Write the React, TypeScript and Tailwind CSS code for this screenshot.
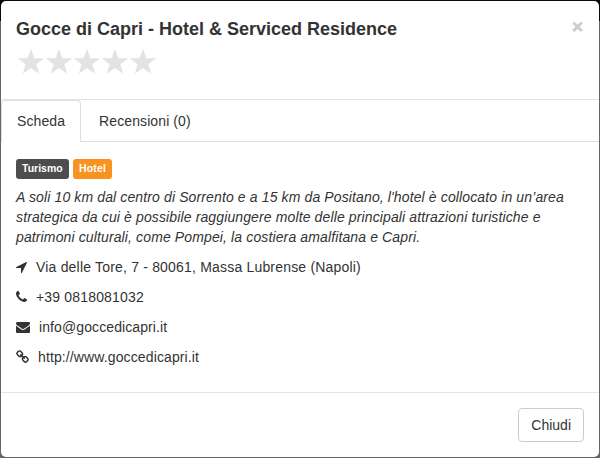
import type { ReactNode } from 'react';

const stars = [1, 2, 3, 4, 5];

const tags = [
  { label: 'Turismo', className: 'w-[53px] bg-[#4d4d4d]' },
  { label: 'Hotel', className: 'w-[39px] bg-[#f7931e] tracking-[0.15px]' },
];

const contacts = [
  {
    text: 'Via delle Tore, 7 - 80061, Massa Lubrense (Napoli)',
    tracking: 'tracking-[0.19px]',
    viewBox: '192 0 1408 1792',
    width: 11,
    path: 'M1593 349l-640 1280q-17 35-57 35-5 0-15-2-22-5-35.500-22.500t-13.500-39.500v-576h-576q-22 0-39.500-13.500t-22.500-35.500 4-42 29-30l1280-640q13-7 29-7 27 0 45 19 15 14 18.500 34.500t-6.500 39.500z',
  },
  {
    text: '+39 0818081032',
    tracking: 'tracking-[0.17px]',
    viewBox: '192 0 1408 1792',
    width: 11,
    path: 'M1600 1240q0 27-10 70.500t-21 68.500q-21 50-122 106-94 51-186 51-27 0-53-3.500t-57.500-12.500-47-14.500-55.500-20.500-49-18q-98-35-175-83-127-79-264-216t-216-264q-48-77-83-175-3-9-18-49t-20.500-55.500-14.500-47-12.500-57.500-3.500-53q0-92 51-186 56-101 106-122 25-11 68.500-21t70.500-10q14 0 21 3 18 6 53 76 11 19 30 54t35 63.500 31 53.500q3 4 17.500 25t21.500 35.500 7 28.500q0 20-28.500 50t-62 55-62 53-28.500 46q0 9 5 22.500t8.500 20.500 14 24 11.500 19q76 137 174 235t235 174q2 1 19 11.500t24 14 20.500 8.500 22.500 5q18 0 46-28.500t53-62 55-62 50-28.500q14 0 28.500 7t35.500 21.500 25 17.500q25 15 53.500 31t63.500 35 54 30q70 35 76 53 3 7 3 21z',
  },
  {
    text: 'info@goccedicapri.it',
    tracking: 'tracking-[0.1px]',
    viewBox: '0 0 1792 1792',
    width: 14,
    path: 'M1792 710v794q0 66-47 113t-113 47h-1472q-66 0-113-47t-47-113v-794q44 49 101 87 362 246 497 345 57 42 92.500 65.500t94.500 48 110 24.500h2q51 0 110-24.500t94.500-48 92.500-65.500q170-123 498-345 57-39 100-87zm0-294q0 79-49 151t-122 123q-376 261-468 325-10 7-42.500 31t-54 38.500-52 32.500-57.500 27-50 9h-2q-23 0-50-9t-57.500-27-52-32.500-54-38.500-42.500-31q-91-64-262-182.500t-205-142.500q-62-42-117-115.500t-55-136.500q0-78 41.500-130t118.500-52h1472q65 0 112.500 47t47.500 113z',
  },
  {
    text: 'http://www.goccedicapri.it',
    tracking: 'tracking-[0.12px]',
    viewBox: '64 0 1664 1792',
    width: 13,
    path: 'M1520 1216q0-40-28-68l-208-208q-28-28-68-28-42 0-72 32 3 3 19 18.500t21.500 21.500 15 19 13 25.500 3.500 27.500q0 40-28 68t-68 28q-15 0-27.500-3.500t-25.500-13-19-15-21.500-21.500-18.500-19q-33 31-33 73 0 40 28 68l206 207q27 27 68 27 40 0 68-26l147-146q28-28 28-67zm-703-705q0-40-28-68l-206-207q-28-28-68-28-39 0-68 27l-147 146q-28 28-28 67 0 40 28 68l208 208q27 27 68 27 42 0 72-31-3-3-19-18.500t-21.500-21.500-15-19-13-25.500-3.500-27.500q0-40 28-68t68-28q15 0 27.500 3.500t25.500 13 19 15 21.500 21.500 18.500 19q33-31 33-73zm895 705q0 120-85 203l-147 146q-83 83-203 83-121 0-204-85l-206-207q-83-83-83-203 0-123 88-209l-88-88q-86 88-208 88-120 0-204-84l-208-208q-84-84-84-204t85-203l147-146q83-83 203-83 121 0 204 85l206 207q83 83 83 203 0 123-88 209l88 88q86-88 208-88 120 0 204 84l208 208q84 84 84 204z',
  },
];

function Tab({ active, children }: { active?: boolean; children: ReactNode }) {
  return (
    <button
      className={
        active
          ? '-mb-px rounded-t border border-[#ddd] border-b-white bg-white px-[15px] py-[10px] tracking-[0.1px]'
          : 'ml-0.5 border border-transparent px-[15px] py-[10px] tracking-[0.1px]'
      }
    >
      {children}
    </button>
  );
}

export default function App() {
  return (
    <div className="h-[458px] w-[600px] overflow-hidden bg-linear-to-b from-[#090909] from-[21px] to-[#666] to-[21px] p-px font-['Liberation_Sans',Arial,sans-serif] text-sm leading-5 text-[#333]">
      <div className="flex h-full flex-col rounded-[5px] bg-white">
        <header className="h-[99px] shrink-0 border-b border-[#e5e5e5] px-[15px] pt-[15px]">
          <div className="flex h-[26px] justify-between">
            <h4 className="text-lg leading-[26px] font-bold">Gocce di Capri - Hotel &amp; Serviced Residence</h4>
            <button className="h-[21px] pr-px text-[19px] leading-[21px] font-bold text-[#ccc] [-webkit-text-stroke:0.6px_#ccc]">
              ×
            </button>
          </div>
          <div className="mt-[7px] flex">
            {stars.map((star) => (
              <svg key={star} className="h-[26px] w-7 fill-[#e3e3e3]" viewBox="0 0 28 26">
                <path d="M15 0l3.500 9.200h10l-8.200 6 3 9.500-8.300-5.700-8.300 5.700 3-9.500-8.200-6h10z" />
              </svg>
            ))}
          </div>
        </header>

        <nav className="flex h-[42px] shrink-0 border-b border-[#ddd]">
          <Tab active>Scheda</Tab>
          <Tab>Recensioni (0)</Tab>
        </nav>

        <main className="h-[251px] shrink-0 border-b border-[#e5e5e5] px-[15px] pt-[17px]">
          <div className="mb-2 flex gap-1">
            {tags.map((tag) => (
              <span
                key={tag.label}
                className={`h-5 rounded-[3px] px-1.5 text-[10.500px] leading-[19px] font-bold text-white ${tag.className}`}
              >
                {tag.label}
              </span>
            ))}
          </div>
          <p className="mb-2.5 tracking-[0.125px] italic">
            A soli 10 km dal centro di Sorrento e a 15 km da Positano, l'hotel è collocato in un’area strategica da cui è
            possibile raggiungere molte delle principali attrazioni turistiche e patrimoni culturali, come Pompei, la
            costiera amalfitana e Capri.
          </p>
          <ul className="flex flex-col gap-2.5">
            {contacts.map((contact) => (
              <li key={contact.text} className="flex items-center gap-[9px]">
                <svg width={contact.width} height={14} viewBox={contact.viewBox} fill="currentColor">
                  <path d={contact.path} />
                </svg>
                <span className={contact.tracking}>{contact.text}</span>
              </li>
            ))}
          </ul>
        </main>

        <footer className="flex justify-end p-[15px]">
          <button className="h-[34px] rounded border border-[#ccc] px-3">Chiudi</button>
        </footer>
      </div>
    </div>
  );
}
